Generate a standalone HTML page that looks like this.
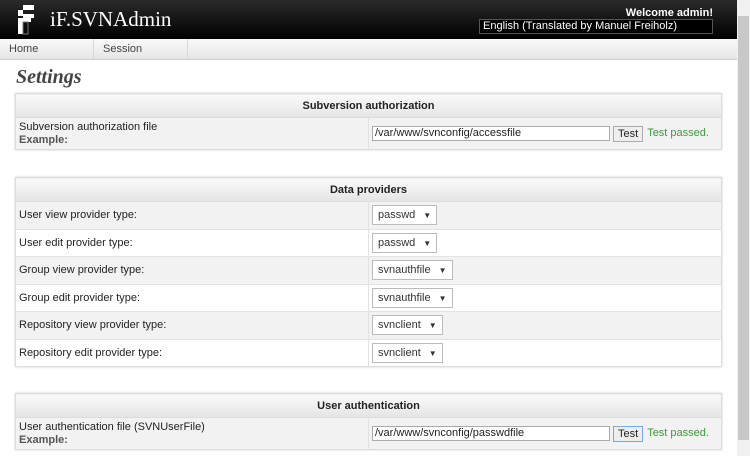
<!DOCTYPE html>
<html><head><style>
*{box-sizing:border-box;margin:0;padding:0}
body{width:750px;height:456px;overflow:hidden;background:#fff;font-family:"Liberation Sans",sans-serif;font-size:11px;color:#222;position:relative}
#hdr{position:absolute;left:0;top:0;width:737px;height:39px;background:linear-gradient(#2a2a2a,#000)}
#logo{position:absolute;left:15px;top:5px;width:22px;height:30px}
#title{position:absolute;left:50px;top:7px;font-family:"Liberation Serif",serif;font-size:21px;color:#fff}
#wel{position:absolute;right:24px;top:7px;color:#fff;font-size:11px;font-weight:bold}
#lang{position:absolute;left:479px;top:19px;width:234px;height:15px;border:1px solid #555;background:#000;color:#fff;font-size:11px;padding-left:3px;line-height:13px}
#nav{position:absolute;left:0;top:39px;width:737px;height:21px;background:linear-gradient(#fafafa,#e6e6e6);border-bottom:1px solid #ccc}
#nav div{position:absolute;top:0;height:20px;line-height:21px;color:#444;font-size:11px;border-right:1px solid #d8d8d8}
h1{position:absolute;left:16px;top:66px;font-family:"Liberation Serif",serif;font-style:italic;font-weight:bold;font-size:20px;color:#444}
table{position:absolute;left:15px;width:707px;border-collapse:collapse;border:1px solid #ddd;box-shadow:0 0 2px #ccc}
th{height:24px;background:linear-gradient(#fafafa,#e4e4e4);font-size:11px;color:#222;border-bottom:1px solid #ddd}
td{border-top:1px solid #e2e2e2;padding:0 3px;height:27.5px}
td.r{border-left:1px solid #e2e2e2;width:353px}
tr.g td{background:#f2f2f2}
.sel{display:inline-block;height:20px;border:1px solid #bbb;background:#fff;line-height:18px;padding:0 5px;font-size:11px;color:#333}
.sel i{font-style:normal;font-size:8px;margin-left:8px}
.inp{display:inline-block;width:238px;height:15px;border:1px solid #aaa;line-height:13px;padding-left:2px;vertical-align:middle;background:#fff}
.btn{display:inline-block;height:16px;border:1px solid #aaa;background:#eee;padding:0 4px;line-height:14px;margin-left:3px;vertical-align:middle}
.ok{color:#3a9a3a;margin-left:4px}
#sb{position:absolute;left:737px;top:0;width:13px;height:456px;background:#f0f0f0}
#th{position:absolute;left:738px;top:16px;width:11px;height:424px;background:#c8c8c8}
</style></head><body>
<div id="hdr">
<svg id="logo" viewBox="0 0 22 30"><rect x="8" y="0" width="11" height="5" fill="#fff"/><rect x="3" y="5" width="5" height="6" fill="#fff"/><rect x="8" y="9" width="11" height="4" fill="#fff"/><rect x="3" y="13" width="13" height="4" fill="#fff"/><rect x="3" y="17" width="5" height="12" fill="#fff"/><rect x="8" y="17" width="5" height="12" fill="none" stroke="#777" stroke-width="1"/></svg>
<div id="title">iF.SVNAdmin</div>
<div id="wel">Welcome admin!</div>
<div id="lang">English (Translated by Manuel Freiholz)</div>
</div>
<div id="nav"><div style="left:0;width:94px;padding-left:9px">Home</div><div style="left:94px;width:94px;padding-left:9px">Session</div></div>
<h1>Settings</h1>
<table style="top:93px"><tr><th colspan="2">Subversion authorization</th></tr>
<tr class="g"><td style="height:32px;line-height:13px">Subversion authorization file<br><b style="color:#555">Example:</b></td><td class="r"><span class="inp">/var/www/svnconfig/accessfile</span><span class="btn">Test</span><span class="ok">Test passed.</span></td></tr></table>
<table style="top:177px"><tr><th colspan="2">Data providers</th></tr>
<tr class="g"><td>User view provider type:</td><td class="r"><span class="sel">passwd<i>▼</i></span></td></tr>
<tr><td>User edit provider type:</td><td class="r"><span class="sel">passwd<i>▼</i></span></td></tr>
<tr class="g"><td>Group view provider type:</td><td class="r"><span class="sel">svnauthfile<i>▼</i></span></td></tr>
<tr><td>Group edit provider type:</td><td class="r"><span class="sel">svnauthfile<i>▼</i></span></td></tr>
<tr class="g"><td>Repository view provider type:</td><td class="r"><span class="sel">svnclient<i>▼</i></span></td></tr>
<tr><td>Repository edit provider type:</td><td class="r"><span class="sel">svnclient<i>▼</i></span></td></tr></table>
<table style="top:393px"><tr><th colspan="2">User authentication</th></tr>
<tr class="g"><td style="height:32px;line-height:13px">User authentication file (SVNUserFile)<br><b style="color:#555">Example:</b></td><td class="r"><span class="inp">/var/www/svnconfig/passwdfile</span><span class="btn" style="border-color:#7aa7e0">Test</span><span class="ok">Test passed.</span></td></tr></table>
<div id="sb"></div><div id="th"></div>
</body></html>
